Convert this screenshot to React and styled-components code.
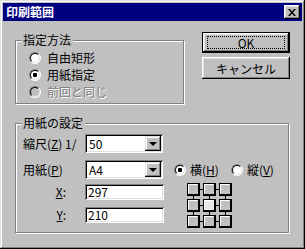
import React from 'react';
import styled, { createGlobalStyle } from 'styled-components';

const GlobalStyle = createGlobalStyle`
  html, body {
    margin: 0;
    padding: 0;
    background: #c0c0c0;
  }
  body {
    font-family: "Noto Sans CJK JP", "Liberation Sans", sans-serif;
    font-size: 12px;
    color: #000;
  }
`;

const Window = styled.div`
  width: 305px;
  height: 249px;
  box-sizing: border-box;
  padding: 3px;
  background: #c0c0c0;
  box-shadow: inset -1px -1px 0 #000, inset 1px 1px 0 #dfdfdf,
    inset -2px -2px 0 #808080, inset 2px 2px 0 #fff;
  display: flex;
  flex-direction: column;
`;

const TitleBar = styled.div`
  height: 18px;
  background: #000080;
  display: flex;
  align-items: center;
  justify-content: space-between;
  padding: 0 2px 0 3px;
`;

const Title = styled.span`
  color: #fff;
  font-weight: bold;
  font-size: 12px;
  line-height: 14px;
`;

const CloseBox = styled.div`
  width: 16px;
  height: 14px;
  box-sizing: border-box;
  background: #c0c0c0;
  box-shadow: inset -1px -1px 0 #000, inset 1px 1px 0 #fff,
    inset -2px -2px 0 #808080, inset 2px 2px 0 #dfdfdf;
  display: flex;
  align-items: center;
  justify-content: center;
`;

const Body = styled.div`
  padding: 11px 12px 0 12px;
`;

const TopRow = styled.div`
  display: flex;
  align-items: flex-start;
`;

const Group = styled.div`
  position: relative;
  box-sizing: border-box;
  width: ${p => p.$w}px;
  height: ${p => p.$h}px;
  margin-top: ${p => p.$top}px;
  border: 1px solid #808080;
  box-shadow: 1px 1px 0 #fff, inset 1px 1px 0 #fff;
`;

const Legend = styled.span`
  position: absolute;
  top: -8px;
  left: 6px;
  padding: 0 2px 0 1px;
  background: #c0c0c0;
  line-height: 14px;
`;

const RadioList = styled.div`
  display: flex;
  flex-direction: column;
  gap: 4px;
  padding: 10px 0 0 13px;
`;

const RadioRow = styled.label`
  display: flex;
  align-items: center;
  height: 13px;
  gap: ${p => p.$gap || 6}px;
  margin-left: ${p => p.$ml || 0}px;
  color: ${p => (p.$disabled ? '#808080' : '#000')};
  text-shadow: ${p => (p.$disabled ? '1px 1px 0 #fff' : 'none')};
  line-height: 13px;
`;

const RadioCircle = styled.span`
  position: relative;
  flex: none;
  width: 12px;
  height: 12px;
  box-sizing: border-box;
  border-radius: 50%;
  border: 1px solid;
  border-color: #808080 #fff #fff #808080;
  background: ${p => (p.$disabled ? '#c0c0c0' : '#fff')};

  &::before {
    content: '';
    position: absolute;
    inset: 0;
    border-radius: 50%;
    border: 1px solid;
    border-color: #000 #dfdfdf #dfdfdf #000;
  }

  &::after {
    content: '';
    display: ${p => (p.$checked ? 'block' : 'none')};
    position: absolute;
    left: 3px;
    top: 3px;
    width: 4px;
    height: 4px;
    border-radius: 1px;
    background: #000;
  }
`;

const ButtonCol = styled.div`
  display: flex;
  flex-direction: column;
  gap: 4px;
  margin-left: 18px;
`;

const Button = styled.button`
  width: 88px;
  height: ${p => p.$h}px;
  padding: 0;
  border: ${p => (p.$default ? '1px solid #000' : 'none')};
  background: #c0c0c0;
  font-family: inherit;
  font-size: 12px;
  color: #000;
  box-shadow: inset -1px -1px 0 #000, inset 1px 1px 0 #fff,
    inset -2px -2px 0 #808080, inset 2px 2px 0 #dfdfdf;
  display: flex;
  align-items: center;
  justify-content: center;
`;

const Focus = styled.span`
  box-sizing: border-box;
  width: 78px;
  height: 13px;
  border: 1px dotted #000;
  display: flex;
  align-items: center;
  justify-content: center;
  line-height: 12px;
`;

const Settings = styled.div`
  display: flex;
  flex-direction: column;
  padding: 10px 0 0 7px;
`;

const FieldRow = styled.div`
  display: flex;
  align-items: center;
  margin-top: ${p => p.$mt || 0}px;
`;

const Label = styled.span`
  width: ${p => p.$w || 62}px;
  flex: none;
  text-align: ${p => p.$align || 'left'};
  padding-right: ${p => p.$pr || 0}px;
  box-sizing: border-box;
  line-height: 14px;
  white-space: nowrap;
`;

const Combo = styled.div`
  width: 78px;
  height: 19px;
  box-sizing: border-box;
  background: #fff;
  box-shadow: inset 1px 1px 0 #808080, inset -1px -1px 0 #fff,
    inset 2px 2px 0 #000, inset -2px -2px 0 #dfdfdf;
  display: flex;
  align-items: center;
  padding: 2px;
`;

const ComboText = styled.span`
  flex: 1;
  padding-left: 2px;
  line-height: 14px;
`;

const DropButton = styled.span`
  width: 16px;
  height: 15px;
  box-sizing: border-box;
  background: #c0c0c0;
  box-shadow: inset -1px -1px 0 #000, inset 1px 1px 0 #dfdfdf,
    inset -2px -2px 0 #808080, inset 2px 2px 0 #fff;
  display: flex;
  align-items: center;
  justify-content: center;
`;

const Arrow = styled.span`
  width: 0;
  height: 0;
  border-left: 4px solid transparent;
  border-right: 4px solid transparent;
  border-top: 4px solid #000;
  margin-top: 1px;
`;

const TextBox = styled.div`
  width: 79px;
  height: 16px;
  box-sizing: border-box;
  background: #fff;
  box-shadow: inset 1px 1px 0 #808080, inset -1px -1px 0 #fff,
    inset 2px 2px 0 #000, inset -2px -2px 0 #dfdfdf;
  padding: 1px 0 0 3px;
  line-height: 14px;
`;

const Radios = styled.div`
  display: flex;
  align-items: center;
  margin-left: 11px;
`;

const LowerRow = styled.div`
  display: flex;
  align-items: flex-start;
  margin-top: 5px;
`;

const XYCol = styled.div`
  display: flex;
  flex-direction: column;
  gap: 7px;
`;

const GridIcon = styled.svg`
  margin-left: 23px;
  margin-top: -1px;
  flex: none;
`;

function Radio({ checked, disabled, children, gap, ml }) {
  return (
    <RadioRow $disabled={disabled} $gap={gap} $ml={ml}>
      <RadioCircle $checked={checked} $disabled={disabled} />
      <span>{children}</span>
    </RadioRow>
  );
}

function ComboBox({ value }) {
  return (
    <Combo>
      <ComboText>{value}</ComboText>
      <DropButton>
        <Arrow />
      </DropButton>
    </Combo>
  );
}

function AnchorGrid() {
  const pos = [0, 16, 32];
  const cells = [];
  pos.forEach((y, r) =>
    pos.forEach((x, c) => {
      const center = r === 1 && c === 1;
      cells.push(
        <g key={`${r}-${c}`} transform={`translate(${x} ${y})`}>
          <rect x="0" y="0" width="13" height="13" fill="#000" />
          <rect x="1" y="1" width="10" height="10" fill={center ? '#e8e8e8' : '#c0c0c0'} />
          <rect x="1" y="1" width="10" height="1" fill="#fff" />
          <rect x="1" y="1" width="1" height="10" fill="#fff" />
        </g>
      );
    })
  );
  return (
    <GridIcon width="46" height="46" viewBox="0 0 46 46">
      <path d="M13 6.5h3M29 6.5h3M13 22.5h3M29 22.5h3M13 38.5h3M29 38.5h3M6.5 13v3M6.5 29v3M22.5 13v3M22.5 29v3M38.5 13v3M38.5 29v3" stroke="#000" strokeWidth="1" />
      {cells}
    </GridIcon>
  );
}

export default function App() {
  return (
    <>
      <GlobalStyle />
      <Window>
        <TitleBar>
          <Title>印刷範囲</Title>
          <CloseBox>
            <svg width="8" height="7" viewBox="0 0 8 7">
              <path d="M0 0h2l2 2.5L6 0h2L5 3.5 8 7H6L4 4.5 2 7H0l3-3.5z" fill="#000" />
            </svg>
          </CloseBox>
        </TitleBar>
        <Body>
          <TopRow>
            <Group $w={170} $h={64} $top={8}>
              <Legend>指定方法</Legend>
              <RadioList>
                <Radio>自由矩形</Radio>
                <Radio checked>用紙指定</Radio>
                <Radio disabled>前回と同じ</Radio>
              </RadioList>
            </Group>
            <ButtonCol>
              <Button $default $h={21}>
                <Focus>OK</Focus>
              </Button>
              <Button $h={22}>キャンセル</Button>
            </ButtonCol>
          </TopRow>
          <Group $w={274} $h={110} $top={19}>
            <Legend>用紙の設定</Legend>
            <Settings>
              <FieldRow>
                <Label>
                  縮尺(<u>Z</u>) 1/
                </Label>
                <ComboBox value="50" />
              </FieldRow>
              <FieldRow $mt={7}>
                <Label>
                  用紙(<u>P</u>)
                </Label>
                <ComboBox value="A4" />
                <Radios>
                  <Radio checked gap={4}>
                    横(<u>H</u>)
                  </Radio>
                  <Radio gap={4} ml={12}>
                    縦(<u>V</u>)
                  </Radio>
                </Radios>
              </FieldRow>
              <LowerRow>
                <XYCol>
                  <FieldRow>
                    <Label $align="right" $pr={19}>
                      <u>X</u>:
                    </Label>
                    <TextBox>297</TextBox>
                  </FieldRow>
                  <FieldRow>
                    <Label $align="right" $pr={19}>
                      <u>Y</u>:
                    </Label>
                    <TextBox>210</TextBox>
                  </FieldRow>
                </XYCol>
                <AnchorGrid />
              </LowerRow>
            </Settings>
          </Group>
        </Body>
      </Window>
    </>
  );
}
